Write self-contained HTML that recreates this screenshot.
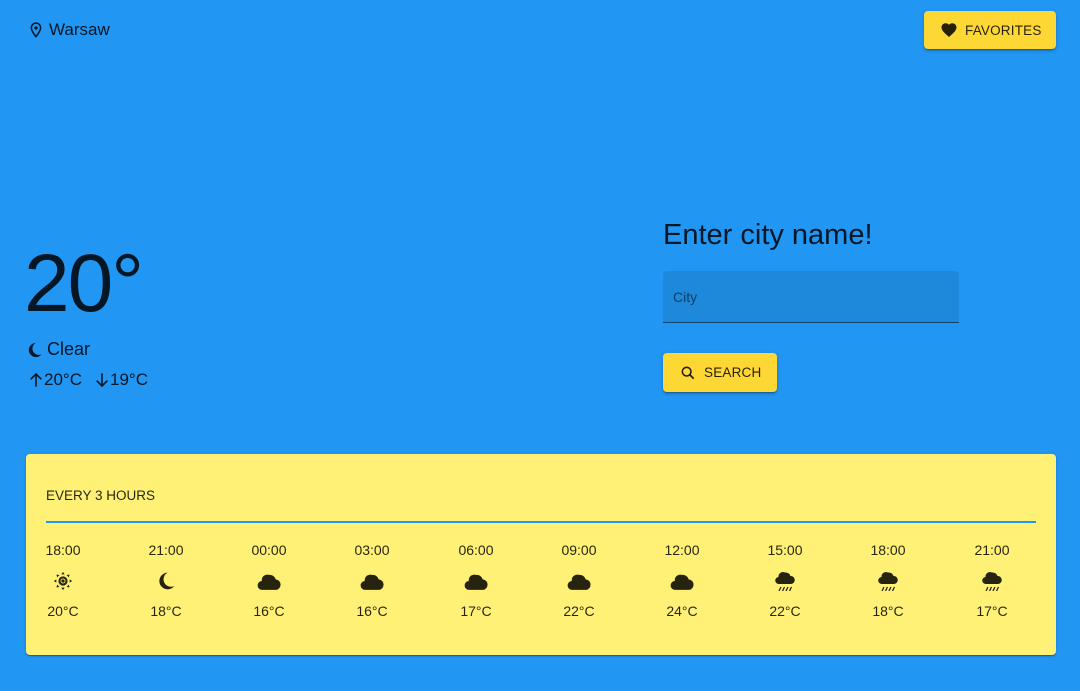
<!DOCTYPE html>
<html><head><meta charset="utf-8"><style>
*{margin:0;padding:0;box-sizing:border-box}
body{width:1080px;height:691px;background:#2196F3;font-family:"Liberation Sans",Arial,sans-serif;color:rgba(0,0,0,0.85);position:relative;overflow:hidden}
.abs{position:absolute}
.btn{background:#FDD835;border-radius:4px;box-shadow:0 3px 1px -2px rgba(0,0,0,.2),0 2px 2px rgba(0,0,0,.14),0 1px 5px rgba(0,0,0,.12);font-size:13.5px;letter-spacing:.2px;display:flex;align-items:center}
.card{left:26px;top:454px;width:1030px;height:201px;background:#FFF176;border-radius:4px;box-shadow:0 2px 1px -1px rgba(0,0,0,.2),0 1px 1px rgba(0,0,0,.14),0 1px 3px rgba(0,0,0,.12)}
.col{position:absolute;top:88px;width:80px;text-align:center;font-size:14px}
.col .t{height:20px}
.col svg{display:block;margin:9px auto 0}
.col .tp{margin-top:12px}
</style></head><body>
<div class="abs" style="left:28px;top:20px;font-size:17px;display:flex;align-items:center">
<svg width="16" height="20" viewBox="0 0 24 24"><path d="M12 2C8.1 2 5 5.1 5 9c0 5.2 7 13 7 13s7-7.8 7-13c0-3.9-3.1-7-7-7zm0 2c2.8 0 5 2.2 5 5 0 2.9-2.9 7.2-5 9.9C9.9 16.2 7 11.9 7 9c0-2.8 2.2-5 5-5z" fill="currentColor" transform="scale(1.15) translate(-1.6 -1.5)"/><circle cx="12" cy="9" r="2.5" fill="currentColor"/></svg>
<span style="margin-left:5px">Warsaw</span></div>
<div class="abs btn" style="left:924px;top:11px;width:132px;height:38px;padding-left:16px">
<svg width="18" height="18" viewBox="0 0 24 24"><path d="M12 21.35l-1.45-1.32C5.4 15.36 2 12.28 2 8.5 2 5.42 4.42 3 7.5 3c1.74 0 3.41.81 4.5 2.09C13.09 3.81 14.76 3 16.5 3 19.58 3 22 5.42 22 8.5c0 3.78-3.4 6.86-8.55 11.54L12 21.35z" fill="currentColor"/></svg>
<span style="margin-left:7px">FAVORITES</span></div>

<div class="abs" style="left:24px;top:238px;font-size:82px;line-height:92px;letter-spacing:-2px">20°</div>
<div class="abs" style="left:26px;top:339px;font-size:18px;display:flex;align-items:center">
<svg width="17" height="20" viewBox="0 0 24 24"><path d="M14 2A10 10 0 1 0 22 18 8.5 8.5 0 0 1 14 2z" fill="currentColor"/></svg><span style="margin-left:4px">Clear</span></div>
<div class="abs" style="left:28px;top:370px;font-size:17px;display:flex;align-items:center">
<svg width="16" height="18" viewBox="0 0 24 24"><path d="M12 3v19M4 11l8-8 8 8" stroke="currentColor" stroke-width="2.4" fill="none"/></svg><span>20°C</span>
<svg style="margin-left:12px" width="16" height="18" viewBox="0 0 24 24"><path d="M12 2v19M4 13l8 8 8-8" stroke="currentColor" stroke-width="2.4" fill="none"/></svg><span>19°C</span></div>

<div class="abs" style="left:663px;top:219px;font-size:29px">Enter city name!</div>
<div class="abs" style="left:663px;top:271px;width:296px;height:52px;background:#1E88DB;border-radius:4px 4px 0 0;border-bottom:1px solid rgba(0,0,0,.5);font-size:14px;color:rgba(0,0,0,.55);padding:18px 0 0 10px">City</div>
<div class="abs btn" style="left:663px;top:353px;width:114px;height:39px;padding-left:17px">
<svg width="16" height="16" viewBox="0 0 24 24"><circle cx="10" cy="10" r="6.5" stroke="currentColor" stroke-width="2.4" fill="none"/><path d="M14.5 14.5l6 6" stroke="currentColor" stroke-width="2.6"/></svg>
<span style="margin-left:8px">SEARCH</span></div>

<div class="abs card">
<div class="abs" style="left:20px;top:34px;font-size:13.5px">EVERY 3 HOURS</div>
<div class="abs" style="left:20px;top:67px;width:990px;height:2px;background:#2196F3"></div>
<div class="col" style="left:-3px"><div class="t">18:00</div><svg width="20" height="20" viewBox="0 0 24 24"><g fill="currentColor"><circle cx="12" cy="12" r="5.5"/><path d="M12 1l2 3h-4zM12 23l-2-3h4zM1 12l3-2v4zM23 12l-3 2v-4zM4.2 4.2l3.5.7-2.8 2.8zM19.8 19.8l-3.5-.7 2.8-2.8zM19.8 4.2l-.7 3.5-2.8-2.8zM4.2 19.8l.7-3.5 2.8 2.8z"/></g><circle cx="12" cy="12" r="3" fill="#FFF176"/><circle cx="12" cy="12" r="2" fill="currentColor"/></svg><div class="tp">20°C</div></div>
<div class="col" style="left:100px"><div class="t">21:00</div><svg width="20" height="20" viewBox="0 0 24 24"><path d="M14 2A10 10 0 1 0 22 18 8.5 8.5 0 0 1 14 2z" fill="currentColor"/></svg><div class="tp">18°C</div></div>
<div class="col" style="left:203px"><div class="t">00:00</div><svg width="24" height="20" viewBox="2 3 20 18"><path d="M6 20a4 4 0 0 1-.5-8A5 5 0 0 1 12 6.5a5.5 5.5 0 0 1 6 4A4.8 4.8 0 0 1 18.5 20z" fill="currentColor"/></svg><div class="tp">16°C</div></div>
<div class="col" style="left:306px"><div class="t">03:00</div><svg width="24" height="20" viewBox="2 3 20 18"><path d="M6 20a4 4 0 0 1-.5-8A5 5 0 0 1 12 6.5a5.5 5.5 0 0 1 6 4A4.8 4.8 0 0 1 18.5 20z" fill="currentColor"/></svg><div class="tp">16°C</div></div>
<div class="col" style="left:410px"><div class="t">06:00</div><svg width="24" height="20" viewBox="2 3 20 18"><path d="M6 20a4 4 0 0 1-.5-8A5 5 0 0 1 12 6.5a5.5 5.5 0 0 1 6 4A4.8 4.8 0 0 1 18.5 20z" fill="currentColor"/></svg><div class="tp">17°C</div></div>
<div class="col" style="left:513px"><div class="t">09:00</div><svg width="24" height="20" viewBox="2 3 20 18"><path d="M6 20a4 4 0 0 1-.5-8A5 5 0 0 1 12 6.5a5.5 5.5 0 0 1 6 4A4.8 4.8 0 0 1 18.5 20z" fill="currentColor"/></svg><div class="tp">22°C</div></div>
<div class="col" style="left:616px"><div class="t">12:00</div><svg width="24" height="20" viewBox="2 3 20 18"><path d="M6 20a4 4 0 0 1-.5-8A5 5 0 0 1 12 6.5a5.5 5.5 0 0 1 6 4A4.8 4.8 0 0 1 18.5 20z" fill="currentColor"/></svg><div class="tp">24°C</div></div>
<div class="col" style="left:719px"><div class="t">15:00</div><svg width="22" height="20" viewBox="2 2 20 20"><path d="M6 15a3.5 3.5 0 0 1-.5-7A4.5 4.5 0 0 1 12 3.5a5 5 0 0 1 5.5 3.5A4 4 0 0 1 18 15z" fill="currentColor"/><path d="M6 22l2-4M9.5 22l2-4M13 22l2-4M16.5 22l2-4" stroke="currentColor" stroke-width="1.3"/></svg><div class="tp">22°C</div></div>
<div class="col" style="left:822px"><div class="t">18:00</div><svg width="22" height="20" viewBox="2 2 20 20"><path d="M6 15a3.5 3.5 0 0 1-.5-7A4.5 4.5 0 0 1 12 3.5a5 5 0 0 1 5.5 3.5A4 4 0 0 1 18 15z" fill="currentColor"/><path d="M6 22l2-4M9.5 22l2-4M13 22l2-4M16.5 22l2-4" stroke="currentColor" stroke-width="1.3"/></svg><div class="tp">18°C</div></div>
<div class="col" style="left:926px"><div class="t">21:00</div><svg width="22" height="20" viewBox="2 2 20 20"><path d="M6 15a3.5 3.5 0 0 1-.5-7A4.5 4.5 0 0 1 12 3.5a5 5 0 0 1 5.5 3.5A4 4 0 0 1 18 15z" fill="currentColor"/><path d="M6 22l2-4M9.5 22l2-4M13 22l2-4M16.5 22l2-4" stroke="currentColor" stroke-width="1.3"/></svg><div class="tp">17°C</div></div>
</div>
</body></html>
